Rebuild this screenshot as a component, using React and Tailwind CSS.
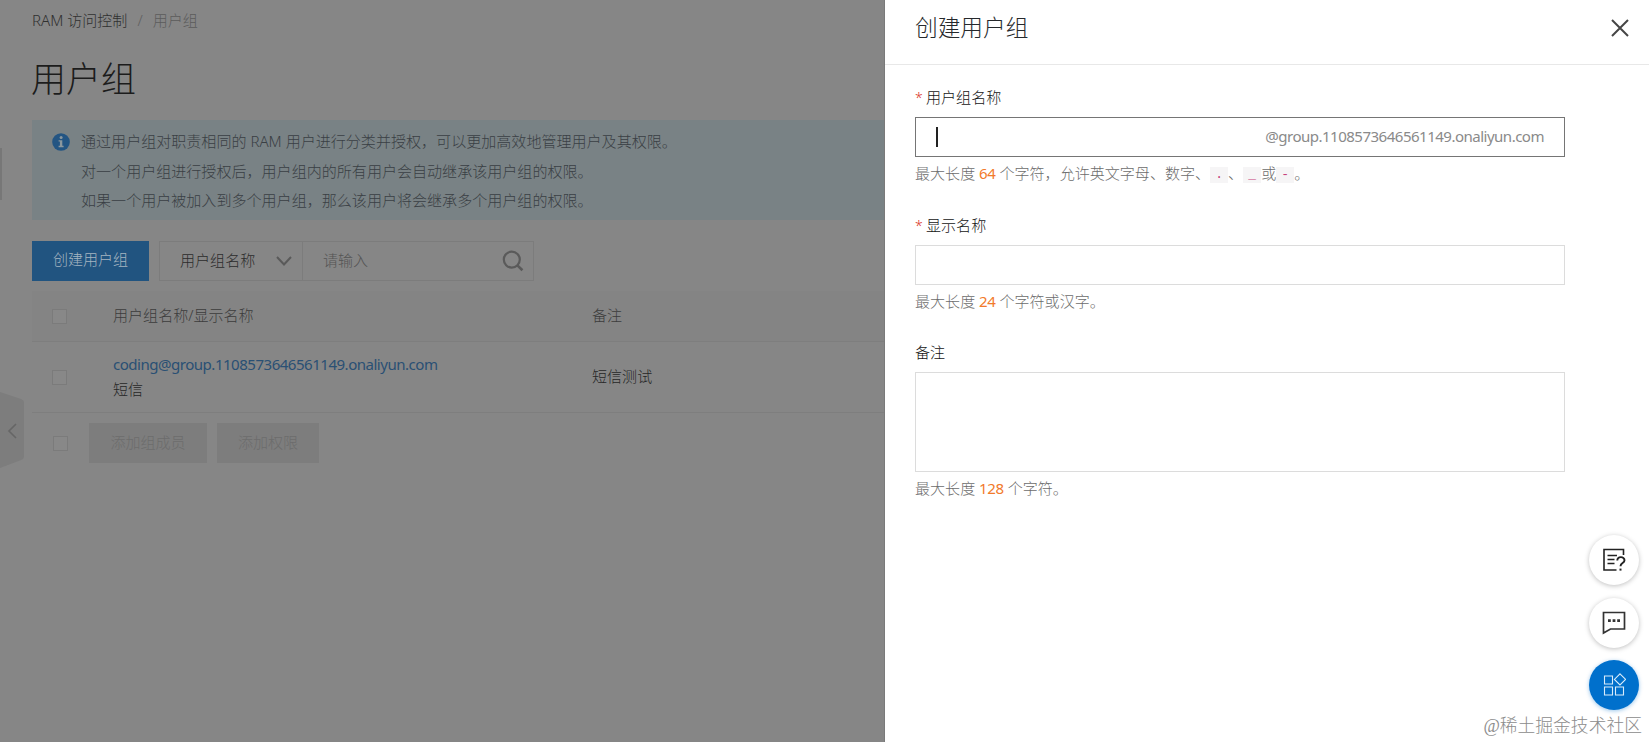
import React from 'react'
import clsx from 'clsx'

const DOMAIN = 'group.1108573646561149.onaliyun.com'

const NOTICES = [
  '通过用户组对职责相同的 RAM 用户进行分类并授权，可以更加高效地管理用户及其权限。',
  '对一个用户组进行授权后，用户组内的所有用户会自动继承该用户组的权限。',
  '如果一个用户被加入到多个用户组，那么该用户将会继承多个用户组的权限。',
]

function Checkbox({ className }) {
  return <span className={clsx('block size-[15px] shrink-0 border border-[#7b7b7b] bg-[#888888]', className)} />
}

function InfoIcon() {
  return (
    <svg className="mt-[6px] ml-px size-[18px] shrink-0" viewBox="0 0 18 18">
      <circle cx="9" cy="9" r="8.8" fill="#235583" />
      <circle cx="9.1" cy="4.6" r="1.5" fill="#8b979d" />
      <path d="M6.6 7.2h3.7v5.6h1.3v1.4H6.6v-1.4h1.3V8.6H6.6z" fill="#8b979d" />
    </svg>
  )
}

function SearchIcon() {
  return (
    <svg className="size-[22px]" viewBox="0 0 22 22" fill="none" stroke="#5a5a5a" strokeWidth="2.2">
      <circle cx="9.8" cy="9.6" r="8" />
      <path d="M15.4 15.4l5 4.8" strokeWidth="2.6" />
    </svg>
  )
}

function GroupList() {
  return (
    <main className="relative h-full w-[885px] shrink-0 overflow-hidden border-r border-[#7a7a7a] bg-[#868686] pl-8 text-[#3c3c3c]">
      <span className="absolute left-0 top-[148px] h-[52px] w-[2px] bg-[#777777]" />

      <nav className="flex h-[41px] items-center text-[#303030]">
        <span>RAM 访问控制</span>
        <span className="mx-[10px] text-[#606060]">/</span>
        <span className="text-[#5c5c5c]">用户组</span>
      </nav>
      <h1 className="-ml-px flex h-[79px] items-center pb-[3px] text-[35px] text-[#1c1c1c]">用户组</h1>

      <div className="flex h-[100px] bg-[#798285] pl-[19px] pt-[7px]">
        <InfoIcon />
        <div className="ml-[11px] text-[#3a3f44]">
          {NOTICES.map((n) => (
            <p key={n} className="h-[29.6px] leading-[29px]">{n}</p>
          ))}
        </div>
      </div>

      <div className="mt-[21px] flex h-10">
        <button className="w-[117px] bg-[#215480] pb-[3px] text-[#a5b4c0]">创建用户组</button>
        <div className="ml-[10px] flex w-[144px] items-center border border-[#7c7c7c] pb-px pl-5 text-[#2c2c2c]">
          用户组名称
          <svg className="ml-[21px] size-4" viewBox="0 0 16 16" fill="none" stroke="#5a5a5a" strokeWidth="2">
            <path d="M1 4l7 7.5L15 4" />
          </svg>
        </div>
        <div className="flex w-[231px] items-center justify-between border border-l-0 border-[#7c7c7c] pb-px pl-5 pr-[9px] text-[#545454]">
          请输入
          <SearchIcon />
        </div>
      </div>

      <div className="mt-[10px] flex h-[51px] items-center border-b border-[#7e7e7e] bg-[#848484] pl-5">
        <Checkbox />
        <span className="ml-[46px] w-[479px] pb-[2px]">用户组名称/显示名称</span>
        <span className="pb-[2px]">备注</span>
      </div>
      <div className="flex h-[71px] items-center border-b border-[#7e7e7e] pl-5">
        <Checkbox />
        <div className="ml-[46px] w-[479px] leading-[25px]">
          <a className="block font-normal tracking-[-0.5px] text-[#2a5074]">coding@{DOMAIN}</a>
          <p className="text-[#262626]">短信</p>
        </div>
        <span className="pb-[2px] text-[#262626]">短信测试</span>
      </div>
      <div className="mt-[10px] flex h-10 items-center pl-[21px]">
        <Checkbox />
        <button className="ml-[21px] h-10 w-[118px] bg-[#7d7d7d] pb-[2px] text-[#6c6c6c]">添加组成员</button>
        <button className="ml-[10px] h-10 w-[102px] bg-[#7d7d7d] pb-[2px] text-[#6c6c6c]">添加权限</button>
      </div>

      {/* sidebar collapse handle */}
      <svg className="absolute left-0 top-[392px] h-[76px] w-6" viewBox="0 0 24 76" fill="none">
        <path d="M0 0l21 7q3 1 3 4v53q0 3-3 4L0 76z" fill="#7d7d7d" />
        <path d="M16 32l-7 7 7 7" stroke="#666" strokeWidth="1.6" />
      </svg>
    </main>
  )
}

function Label({ required, children }) {
  return (
    <label className="flex h-[38px] items-center pb-[2px] text-[#141414]">
      {required && <span className="mr-[5px] w-[6px] text-[14px] text-[#d93026]">*</span>}
      {children}
    </label>
  )
}

function Help({ max, children }) {
  return (
    <p className="h-[34px] leading-[32px] text-[#6c6c6c]">
      最大长度 <span className="font-normal tracking-[-0.4px] text-[#f27a2b]">{max}</span> {children}
    </p>
  )
}

function Code({ children }) {
  return (
    <code className="inline-flex h-4 w-[18px] items-center justify-center bg-[#f6f5f6] align-middle font-['Liberation_Mono',monospace] text-[13px] font-normal leading-4 text-[#c7417b]">
      {children}
    </code>
  )
}

function CreateDrawer() {
  return (
    <aside className="flex-1 bg-white">
      <header className="flex h-[65px] items-start justify-between border-b border-[#e8e8e8] pl-[30px] pr-5">
        <h2 className="h-[56px] text-[22.7px] leading-[56px] text-[#26292c]">创建用户组</h2>
        <svg className="mt-[19px] size-[18px]" viewBox="0 0 18 18" stroke="#454545" strokeWidth="2">
          <path d="M1 1l16 16M17 1L1 17" />
        </svg>
      </header>
      <form className="ml-[30px] w-[650px] pt-[14px]">
        <Label required>用户组名称</Label>
        <div className="flex h-10 items-center border border-[#757575] pl-5 pr-5">
          <span className="h-5 w-[2px] bg-[#222]" />
          <span className="ml-auto pb-[2px] font-normal tracking-[-0.52px] text-[#8a8a8a]">@{DOMAIN}</span>
        </div>
        <Help max="64">
          个字符，允许英文字母、数字、<Code>.</Code>、<Code>_</Code>或<Code>-</Code>。
        </Help>

        <div className="mt-[16px]">
          <Label required>显示名称</Label>
          <div className="h-10 border border-[#dcdcdc]" />
          <Help max="24">个字符或汉字。</Help>
        </div>

        <div className="mt-[15px]">
          <Label>备注</Label>
          <div className="h-[100px] border border-[#dcdcdc]" />
          <Help max="128">个字符。</Help>
        </div>
      </form>
    </aside>
  )
}

function FloatingTools() {
  return (
    <div className="absolute right-[10px] top-[535px] flex flex-col">
      <button className="flex size-[50px] items-center justify-center rounded-full bg-white shadow-[0_1px_5px_rgba(0,0,0,0.25)]">
        <svg className="size-6" viewBox="0 0 24 24" fill="none" stroke="#222" strokeWidth="1.6">
          <path d="M21.5 7V1.5H2v20.5h12.5" />
          <path d="M5.5 7.5h9.5M5.5 11.5h7M5.5 15.5h7" />
          <path d="M15.3 12.6c0-4.6 7.2-4.4 7.2-.4 0 3-4 2.7-4 6" strokeWidth="1.9" />
          <path d="M18.5 20.6v2" strokeWidth="2" />
        </svg>
      </button>
      <button className="mt-[13px] flex size-[50px] items-center justify-center rounded-full bg-white shadow-[0_1px_5px_rgba(0,0,0,0.25)]">
        <svg className="size-6" viewBox="0 0 24 24" fill="none" stroke="#333" strokeWidth="1.7">
          <path d="M1.5 1.5h21v16.5H8.5l-7 4z" />
          <path d="M6 9.6h2.8M10.6 9.6h2.8M15.2 9.6h2.8" strokeWidth="2.8" />
        </svg>
      </button>
      <button className="mt-3 flex size-[50px] items-center justify-center rounded-full bg-[#0070cc] shadow-[0_1px_4px_rgba(0,112,204,0.4)]">
        <svg className="size-6" viewBox="0 0 24 24" fill="none" stroke="#d9ecfa" strokeWidth="1.1">
          <path d="M2.5 3h8v8h-8zM2.5 14h8v8h-8zM13.5 14h8v8h-8z" />
          <path d="M18 .8l5.6 5.6L18 12l-5.6-5.6z" />
        </svg>
      </button>
    </div>
  )
}

export default function App() {
  return (
    <div className="relative flex h-[742px] w-[1649px] overflow-hidden bg-white font-['Noto_Sans','Noto_Sans_CJK_SC',sans-serif] text-[15.05px] font-light">
      <GroupList />
      <CreateDrawer />
      <FloatingTools />
      <span className="absolute bottom-[2px] right-[7px] font-['Liberation_Serif','Noto_Sans_CJK_SC',serif] text-[17.8px] text-[#8c8c8c]">
        @稀土掘金技术社区
      </span>
    </div>
  )
}
